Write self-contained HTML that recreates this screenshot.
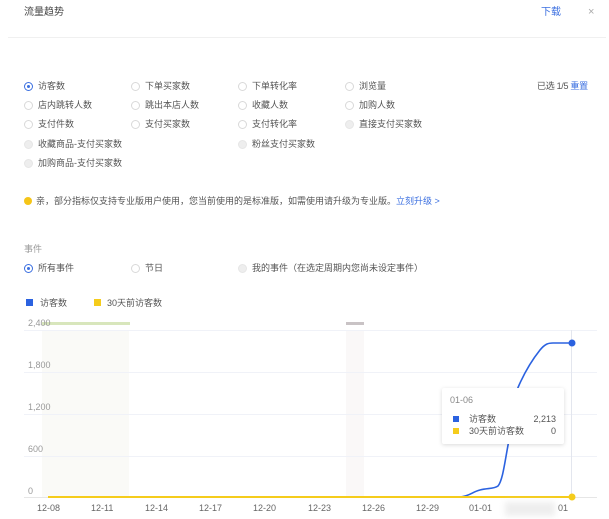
<!DOCTYPE html>
<html><head><meta charset="utf-8"><style>
body{margin:0;width:609px;height:519px;background:#fff;font-family:"Liberation Sans","Noto Sans CJK SC",sans-serif;color:#333;position:relative;overflow:hidden}
.a{position:absolute;font-size:9px;white-space:nowrap;line-height:12px}
.r{position:absolute;width:9px;height:9px;border:1px solid #d9d9d9;border-radius:50%;box-sizing:border-box;background:#fff}
.r.on{border-color:#3b6fe0}
.r.on:after{content:"";position:absolute;left:2px;top:2px;width:3px;height:3px;border-radius:50%;background:#3b6fe0}
.r.dis{background:#eee;border-color:#e6e6e6}
.g{color:#555}
.ax{position:absolute;font-size:9px;color:#999;line-height:10px}
</style></head><body>
<div class="a" style="left:24px;top:7px;font-size:10px;color:#444">流量趋势</div>
<div class="a" style="left:541px;top:7px;font-size:10px;color:#3b6fe0">下载</div>
<div class="a" style="left:588px;top:6px;font-size:11px;color:#aaa">×</div>
<div style="position:absolute;left:8px;top:37px;width:598px;height:1px;background:#f0f0f0"></div>

<div class="r on" style="left:24px;top:82px"></div><div class="a g" style="left:38px;top:80px">访客数</div>
<div class="r" style="left:131px;top:82px"></div><div class="a g" style="left:145px;top:80px">下单买家数</div>
<div class="r" style="left:238px;top:82px"></div><div class="a g" style="left:252px;top:80px">下单转化率</div>
<div class="r" style="left:345px;top:82px"></div><div class="a g" style="left:359px;top:80px">浏览量</div>
<div class="a g" style="left:537px;top:80px;letter-spacing:-0.3px">已选 1/5 <span style="color:#3b6fe0">重置</span></div>

<div class="r" style="left:24px;top:101px"></div><div class="a g" style="left:38px;top:99px">店内跳转人数</div>
<div class="r" style="left:131px;top:101px"></div><div class="a g" style="left:145px;top:99px">跳出本店人数</div>
<div class="r" style="left:238px;top:101px"></div><div class="a g" style="left:252px;top:99px">收藏人数</div>
<div class="r" style="left:345px;top:101px"></div><div class="a g" style="left:359px;top:99px">加购人数</div>

<div class="r" style="left:24px;top:120px"></div><div class="a g" style="left:38px;top:118px">支付件数</div>
<div class="r" style="left:131px;top:120px"></div><div class="a g" style="left:145px;top:118px">支付买家数</div>
<div class="r" style="left:238px;top:120px"></div><div class="a g" style="left:252px;top:118px">支付转化率</div>
<div class="r dis" style="left:345px;top:120px"></div><div class="a g" style="left:359px;top:118px">直接支付买家数</div>

<div class="r dis" style="left:24px;top:140px"></div><div class="a g" style="left:38px;top:138px">收藏商品-支付买家数</div>
<div class="r dis" style="left:238px;top:140px"></div><div class="a g" style="left:252px;top:138px">粉丝支付买家数</div>

<div class="r dis" style="left:24px;top:159px"></div><div class="a g" style="left:38px;top:157px">加购商品-支付买家数</div>

<div style="position:absolute;left:24px;top:197px;width:8px;height:8px;border-radius:50%;background:#f5c518"></div>
<div class="a g" style="left:36px;top:195px">亲，部分指标仅支持专业版用户使用，您当前使用的是标准版，如需使用请升级为专业版。<span style="color:#3b6fe0">立刻升级 &gt;</span></div>

<div class="a" style="left:24px;top:243px;color:#999">事件</div>
<div class="r on" style="left:24px;top:264px"></div><div class="a g" style="left:38px;top:262px">所有事件</div>
<div class="r" style="left:131px;top:264px"></div><div class="a g" style="left:145px;top:262px">节日</div>
<div class="r dis" style="left:238px;top:264px"></div><div class="a g" style="left:252px;top:262px">我的事件（在选定周期内您尚未设定事件）</div>

<div style="position:absolute;left:26px;top:299px;width:7px;height:7px;background:#2b62e0"></div>
<div class="a g" style="left:40px;top:297px">访客数</div>
<div style="position:absolute;left:94px;top:299px;width:7px;height:7px;background:#f5cc1c"></div>
<div class="a g" style="left:107px;top:297px">30天前访客数</div>

<svg style="position:absolute;left:0;top:0" width="609" height="519">
<rect x="42" y="330" width="87" height="167" fill="#fafaf7"/>
<rect x="346" y="330" width="18" height="167" fill="#faf8f8"/>
<rect x="42" y="322" width="88" height="3" fill="#d8e6bc"/>
<rect x="346" y="322" width="18" height="3" fill="#c9c3c5"/>
<g stroke="#f0f2f8" stroke-width="1">
<line x1="24" y1="330.5" x2="597" y2="330.5"/>
<line x1="24" y1="372.5" x2="597" y2="372.5"/>
<line x1="24" y1="414.5" x2="597" y2="414.5"/>
<line x1="24" y1="456.5" x2="597" y2="456.5"/>
</g>
<line x1="24" y1="497.5" x2="597" y2="497.5" stroke="#e6e6e6"/>
<line x1="571.5" y1="330" x2="571.5" y2="497" stroke="#e3e6ee"/>
<path d="M48 497 L460 497 C470 496 472 492 480 490 C488 488 494 489 498 486 C503 480 505 460 509 440 C512 410 514 395 520 383 C526 370 532 360 540 350 C545 344 548 343 553 343 L572 343" fill="none" stroke="#2b62e0" stroke-width="1.6"/>
<line x1="48" y1="497" x2="572" y2="497" stroke="#f5cc1c" stroke-width="2"/>
<circle cx="572" cy="343" r="3.5" fill="#2b62e0"/>
<circle cx="572" cy="497" r="3.5" fill="#f5cc1c"/>
</svg>
<div class="ax" style="left:28px;top:318px">2,400</div>
<div class="ax" style="left:28px;top:360px">1,800</div>
<div class="ax" style="left:28px;top:402px">1,200</div>
<div class="ax" style="left:28px;top:444px">600</div>
<div class="ax" style="left:28px;top:486px">0</div>
<div class="ax" style="left:37px;top:503px;color:#666">12-08</div>
<div class="ax" style="left:91px;top:503px;color:#666">12-11</div>
<div class="ax" style="left:145px;top:503px;color:#666">12-14</div>
<div class="ax" style="left:199px;top:503px;color:#666">12-17</div>
<div class="ax" style="left:253px;top:503px;color:#666">12-20</div>
<div class="ax" style="left:308px;top:503px;color:#666">12-23</div>
<div class="ax" style="left:362px;top:503px;color:#666">12-26</div>
<div class="ax" style="left:416px;top:503px;color:#666">12-29</div>
<div class="ax" style="left:469px;top:503px;color:#666">01-01</div>
<div class="ax" style="left:558px;top:503px;color:#666">01</div>
<div style="position:absolute;left:505px;top:502px;width:50px;height:14px;background:#eee;filter:blur(3px)"></div>

<div style="position:absolute;left:442px;top:388px;width:122px;height:56px;background:#fff;box-shadow:0 1px 4px rgba(0,0,0,.15);border-radius:2px">
<div class="a" style="left:8px;top:6px;color:#888">01-06</div>
<div style="position:absolute;left:11px;top:28px;width:6px;height:6px;background:#2b62e0"></div>
<div class="a g" style="left:27px;top:25px">访客数</div>
<div class="a g" style="right:8px;top:25px">2,213</div>
<div style="position:absolute;left:11px;top:40px;width:6px;height:6px;background:#f5cc1c"></div>
<div class="a g" style="left:27px;top:37px">30天前访客数</div>
<div class="a g" style="right:8px;top:37px">0</div>
</div>
</body></html>
